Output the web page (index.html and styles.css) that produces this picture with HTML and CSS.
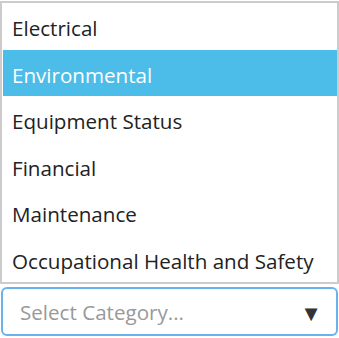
FILE: index.html
```html
<!DOCTYPE html>
<html lang="en">
<head>
    <meta charset="UTF-8">
    <meta name="viewport" content="width=device-width, initial-scale=1.0">
    <title>Select Category</title>
    <link rel="stylesheet" href="styles.css">
</head>
<body>

<div class="picker">
    <ul class="options">
        <li class="option">Electrical</li>
        <li class="option selected">Environmental</li>
        <li class="option">Equipment Status</li>
        <li class="option">Financial</li>
        <li class="option">Maintenance</li>
        <li class="option">Occupational Health and Safety</li>
    </ul>

    <div class="select-box">
        <span class="placeholder">Select Category...</span>
        <span class="arrow">&#9660;</span>
    </div>
</div>

</body>
</html>
```

FILE: styles.css
```css
body {
    margin: 0;
    font-family: "Open Sans", "Noto Sans", sans-serif;
    background-color: #fff;
    color: #222;
}
.picker {
    width: 339px;
    padding-top: 1px;
}
.options {
    list-style: none;
    margin: 0;
    padding: 0 0 0 1px;
    border: 2px solid #ccc;
}
.option {
    height: 46.5px;
    line-height: 50px;
    padding-left: 9px;
    font-size: 20.6px;
    white-space: nowrap;
}
.option.selected {
    background-color: #4cbce8;
    color: #fff;
}
.select-box {
    display: flex;
    align-items: center;
    justify-content: space-between;
    height: 45px;
    margin: 3px 1px 0 1px;
    padding: 0 14px 0 17px;
    border: 2px solid #6ab3ea;
    border-radius: 6px;
}
.placeholder {
    font-size: 20.6px;
    color: #999;
}
.arrow {
    font-size: 22px;
    color: #333;
}
```
